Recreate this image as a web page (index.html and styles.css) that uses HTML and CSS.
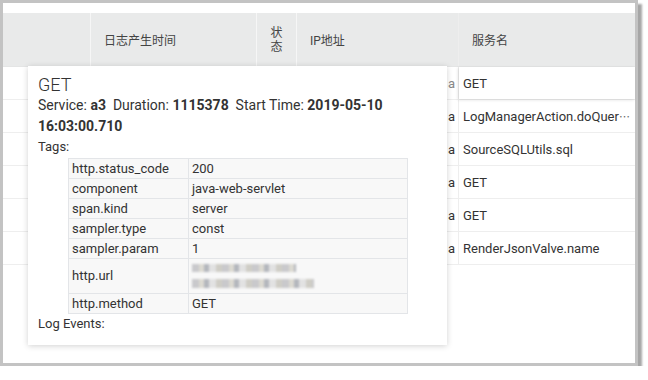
FILE: index.html
```html
<!DOCTYPE html>
<html lang="zh">
<head>
  <meta charset="UTF-8">
  <meta name="viewport" content="width=device-width, initial-scale=1.0">
  <title>Trace Log</title>
  <link rel="stylesheet" href="styles.css">
</head>
<body>
  <div class="frame">
    <div class="table">
      <div class="row head">
        <div class="cell c1"></div>
        <div class="cell c2">日志产生时间</div>
        <div class="cell c3">状<br>态</div>
        <div class="cell c4">IP地址</div>
        <div class="cell c5">服务名</div>
      </div>
      <div class="row">
        <div class="cell c1"></div><div class="cell c2"></div><div class="cell c3"></div>
        <div class="cell c4 ip faded">a</div>
        <div class="cell c5 hover">GET</div>
      </div>
      <div class="row">
        <div class="cell c1"></div><div class="cell c2"></div><div class="cell c3"></div>
        <div class="cell c4 ip">a</div>
        <div class="cell c5">LogManagerAction.doQuer<span class="dots">⋯</span></div>
      </div>
      <div class="row">
        <div class="cell c1"></div><div class="cell c2"></div><div class="cell c3"></div>
        <div class="cell c4 ip">a</div>
        <div class="cell c5">SourceSQLUtils.sql</div>
      </div>
      <div class="row">
        <div class="cell c1"></div><div class="cell c2"></div><div class="cell c3"></div>
        <div class="cell c4 ip">a</div>
        <div class="cell c5">GET</div>
      </div>
      <div class="row">
        <div class="cell c1"></div><div class="cell c2"></div><div class="cell c3"></div>
        <div class="cell c4 ip">a</div>
        <div class="cell c5">GET</div>
      </div>
      <div class="row">
        <div class="cell c1"></div><div class="cell c2"></div><div class="cell c3"></div>
        <div class="cell c4 ip">a</div>
        <div class="cell c5">RenderJsonValve.name</div>
      </div>
    </div>

    <div class="popover">
      <div class="title">GET</div>
      <div class="info">Service: <b>a3</b>&nbsp; Duration: <b>1115378</b>&nbsp; Start Time: <b>2019-05-10<br>16:03:00.710</b></div>
      <div class="label">Tags:</div>
      <table class="tags">
        <tr><td>http.status_code</td><td>200</td></tr>
        <tr><td>component</td><td>java-web-servlet</td></tr>
        <tr><td>span.kind</td><td>server</td></tr>
        <tr><td>sampler.type</td><td>const</td></tr>
        <tr><td>sampler.param</td><td>1</td></tr>
        <tr class="url"><td>http.url</td><td><span class="blur b1"></span><span class="blur b2"></span></td></tr>
        <tr><td>http.method</td><td>GET</td></tr>
      </table>
      <div class="label">Log Events:</div>
    </div>
  </div>
</body>
</html>
```

FILE: styles.css
```css
body {
  margin: 0;
  background: #fff;
  font-family: Roboto, "Noto Sans CJK SC", sans-serif;
  color: #333;
}

.frame {
  position: relative;
  box-sizing: border-box;
  width: 638px;
  height: 366px;
  border: 3px solid #c3c3c3;
  background: #fff;
  box-shadow: 4px 4px 2px rgba(0, 0, 0, 0.35);
  padding-top: 10px;
}

.row {
  display: grid;
  grid-template-columns: 88px 166px 40px 162px 1fr;
  height: 32px;
  border-bottom: 1px solid #eeeeee;
  font-size: 13px;
}
.row.head {
  height: 53px;
  background: #e9eaea;
  border-bottom: 1px solid #e4e5e5;
  font-size: 12px;
  color: #444;
}
.cell {
  display: flex;
  align-items: center;
  white-space: nowrap;
  overflow: hidden;
}
.head .cell {
  padding-left: 13px;
  border-right: 1px solid #f6f6f6;
}
.head .cell.c5 {
  border-right: none;
}
.head .c3 {
  padding-left: 0;
  justify-content: center;
  text-align: center;
  line-height: 14px;
}
.row .c4 {
  border-right: 1px solid #eeeeee;
}
.ip {
  justify-content: flex-end;
  padding-right: 3px;
}
.faded {
  color: #888;
}
.c5 {
  padding-left: 4px;
}
.hover {
  position: relative;
  box-shadow: -1px 1px 3px rgba(0, 0, 0, 0.12);
  background: #fff;
}
.dots {
  font-family: "Noto Sans CJK SC", sans-serif;
  color: #666;
  font-size: 11px;
}

.popover {
  position: absolute;
  left: 25px;
  top: 63px;
  width: 419px;
  height: 279px;
  box-sizing: border-box;
  padding: 8px 10px 0;
  background: #fff;
  box-shadow: 0 1px 6px rgba(0, 0, 0, 0.18);
  font-size: 13px;
}
.title {
  font-size: 18px;
  font-weight: 300;
  line-height: 21px;
}
.info {
  font-size: 14px;
  line-height: 21px;
}
.info b {
  font-weight: 700;
  color: #333;
}
.label {
  line-height: 20px;
}
.tags {
  margin: 1px 0 0 30px;
  width: 340px;
  border-collapse: collapse;
  background: #f8f8f8;
  font-size: 13px;
}
.tags td {
  border: 1px solid #e3e5e8;
  height: 19px;
  padding: 0 3px;
  line-height: 18px;
}
.tags td:first-child {
  width: 113px;
}
.blur {
  display: block;
  filter: blur(0.8px);
  background: repeating-linear-gradient(90deg, #c9c9cc 0 7px, #dcdad2 7px 12px, #b4b7bd 12px 17px, #e2e2e2 17px 24px, #cfcdc6 24px 30px);
}
.b1 {
  width: 104px;
  height: 8px;
  margin: 5px 0 7px;
}
.b2 {
  width: 122px;
  height: 9px;
  margin-bottom: 5px;
}
```
